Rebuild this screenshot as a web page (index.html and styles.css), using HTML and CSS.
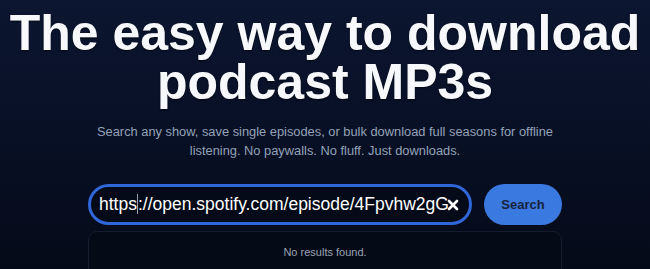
FILE: index.html
```html
<!DOCTYPE html>
<html lang="en">
<head>
<meta charset="utf-8">
<title>Podcast MP3 downloader</title>
<link rel="stylesheet" href="styles.css">
</head>
<body>
<main class="hero">
  <h1 class="title">The easy way to download podcast MP3s</h1>
  <p class="lead">Search any show, save single episodes, or bulk download full seasons for offline listening. No paywalls. No fluff. Just downloads.</p>
  <div class="search">
    <form class="search-row">
      <div class="field">
        <span class="field-text">https<span class="caret"></span>://open.spotify.com/episode/4Fpvhw2gG5</span>
        <svg class="clear" viewBox="0 0 12 12" width="12" height="12" aria-hidden="true">
          <path d="M2 2 L10 10 M10 2 L2 10" stroke="#ffffff" stroke-width="2.6" stroke-linecap="round"/>
        </svg>
      </div>
      <button class="btn" type="button">Search</button>
    </form>
    <div class="results">
      <p class="empty">No results found.</p>
    </div>
  </div>
</main>
</body>
</html>
```

FILE: styles.css
```css
* { box-sizing: border-box; }
html, body { margin: 0; padding: 0; }
body {
  min-height: 100vh;
  background: linear-gradient(180deg, #0c1630 0%, #081026 45%, #040915 100%);
  font-family: "Liberation Sans", Arial, sans-serif;
  color: #f5f7fb;
  overflow: hidden;
}
.hero {
  display: flex;
  flex-direction: column;
  align-items: center;
  padding-top: 9px;
}
.title {
  margin: 0;
  width: 650px;
  text-align: center;
  font-size: 50px;
  line-height: 49px;
  font-weight: 700;
  letter-spacing: 0;
  color: #f7f8fc;
  text-shadow: 0 1px 2px rgba(0,0,0,0.6);
}
.lead {
  margin: 15px 0 0;
  width: 480px;
  text-align: center;
  font-size: 12.85px;
  line-height: 19px;
  color: #94a3b8;
}
.search {
  margin-top: 24px;
  width: 474px;
  display: flex;
  flex-direction: column;
  gap: 6px;
}
.search-row {
  margin: 0;
  display: flex;
  gap: 12px;
  align-items: center;
}
.field {
  flex: 1;
  min-width: 0;
  height: 41px;
  border: 3px solid #2f66d8;
  border-radius: 999px;
  background: #050a18;
  display: flex;
  align-items: center;
  padding: 0 10px 0 8px;
  overflow: hidden;
}
.field-text {
  flex: 1;
  min-width: 0;
  white-space: nowrap;
  overflow: hidden;
  font-size: 17.5px;
  color: #ffffff;
}
.caret {
  display: inline-block;
  width: 1px;
  height: 20px;
  background: #9aa3b5;
  vertical-align: -4px;
}
.clear { flex: none; margin-left: -3px; }
.btn {
  flex: none;
  width: 78px;
  height: 41px;
  border: 0;
  border-radius: 999px;
  background: #3a79e0;
  color: #17233d;
  font-family: "Liberation Sans", Arial, sans-serif;
  font-size: 13px;
  font-weight: 700;
}
.results {
  height: 60px;
  border: 1px solid #141c2e;
  border-radius: 9px;
  background: #050a17;
  padding-top: 14px;
}
.empty {
  margin: 0;
  text-align: center;
  font-size: 11px;
  color: #9aa3b2;
}
```
